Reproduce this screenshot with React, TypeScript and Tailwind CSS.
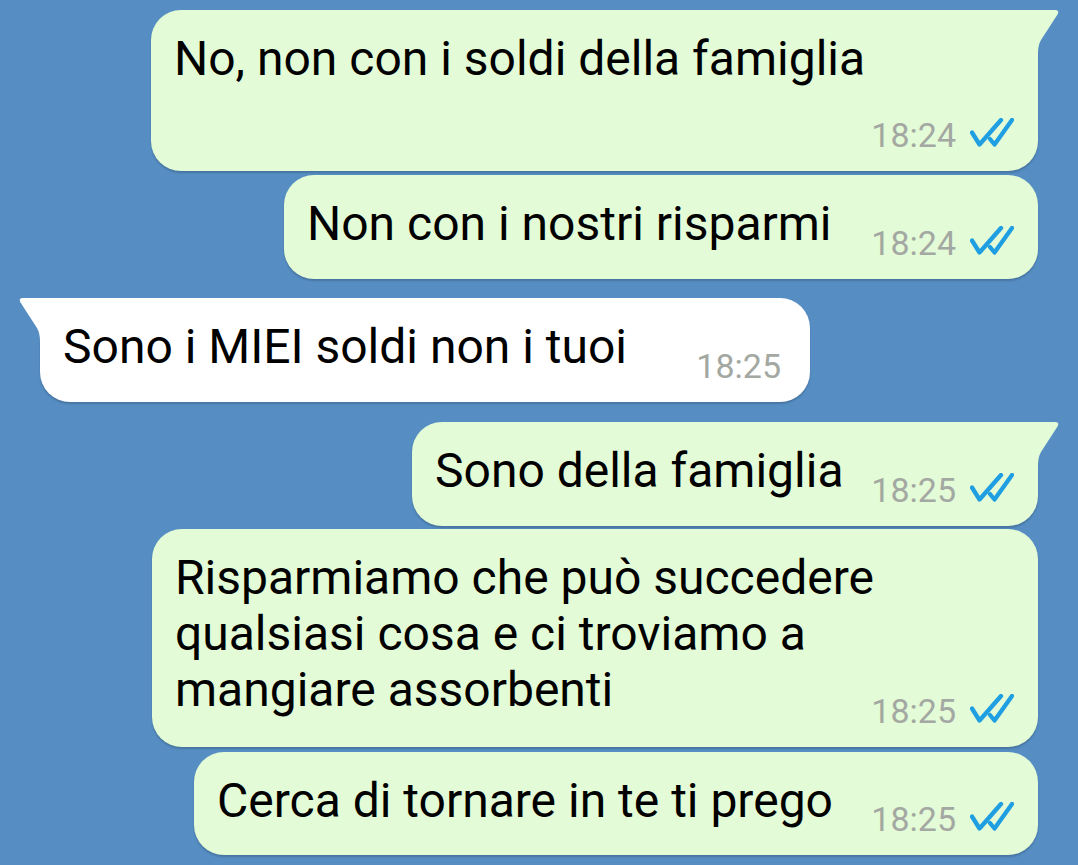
import type { ReactNode } from "react";

type Msg = {
  out: boolean;
  tail?: boolean;
  lines: string[];
  time: string;
  layout: "inline" | "below";
  box: string; // width / height / margin classes
};

const messages: Msg[] = [
  {
    out: true,
    tail: true,
    lines: ["No, non con i soldi della famiglia"],
    time: "18:24",
    layout: "below",
    box: "w-[887px] h-[161px] mt-[10px]",
  },
  {
    out: true,
    lines: ["Non con i nostri risparmi"],
    time: "18:24",
    layout: "inline",
    box: "w-[754px] h-[104px] mt-[4px]",
  },
  {
    out: false,
    tail: true,
    lines: ["Sono i MIEI soldi non i tuoi"],
    time: "18:25",
    layout: "inline",
    box: "w-[770px] h-[104px] mt-[19px]",
  },
  {
    out: true,
    tail: true,
    lines: ["Sono della famiglia"],
    time: "18:25",
    layout: "inline",
    box: "w-[626px] h-[104px] mt-[20px]",
  },
  {
    out: true,
    lines: [
      "Risparmiamo che può succedere",
      "qualsiasi cosa e ci troviamo a",
      "mangiare assorbenti",
    ],
    time: "18:25",
    layout: "inline",
    box: "w-[886px] h-[218px] mt-[3px]",
  },
  {
    out: true,
    lines: ["Cerca di tornare in te ti prego"],
    time: "18:25",
    layout: "inline",
    box: "w-[844px] h-[103px] mt-[5px]",
  },
];

function DoubleCheck() {
  return (
    <svg
      width="44"
      height="30"
      viewBox="0 0 44 30"
      fill="none"
      stroke="#1f9fe2"
      strokeWidth="4.3"
      strokeLinecap="round"
      strokeLinejoin="round"
      className="mb-[7px] ml-[14px] shrink-0"
    >
      <path d="M2 14.5 L9.5 26.5 L31 2" />
      <path d="M20 21 L24.5 26.5 L42 2" />
    </svg>
  );
}

function Time({ time, out }: { time: string; out: boolean }) {
  return (
    <div className="flex shrink-0 items-end self-end pb-[16px]">
      <span className="text-[34px] leading-[40px] text-[#a3a8a2]">{time}</span>
      {out && <DoubleCheck />}
    </div>
  );
}

function Tail({ out }: { out: boolean }) {
  // little speech tail on the first bubble of a group
  if (out) {
    return (
      <svg
        width="23"
        height="44"
        viewBox="0 0 23 44"
        className="absolute top-0 left-full -ml-px"
      >
        <path
          d="M0 0 H18 Q23 0 20.5 4.5 L4 30 Q1 35 1 44 L0 44 Z"
          fill="#e3fbd6"
        />
      </svg>
    );
  }
  return (
    <svg
      width="23"
      height="44"
      viewBox="0 0 23 44"
      className="absolute top-0 right-full -mr-px"
    >
      <path d="M23 0 H5 Q0 0 2.5 4.5 L19 30 Q22 35 22 44 L23 44 Z" fill="#ffffff" />
    </svg>
  );
}

function Bubble({ m }: { m: Msg }) {
  const text: ReactNode = m.lines.map((l, i) => (
    <span key={i} className="block whitespace-nowrap">
      {l}
    </span>
  ));

  return (
    <div
      className={`relative flex shrink-0 shadow-[0_2px_2px_rgba(0,0,0,0.18)] ${m.box} ${
        m.out
          ? "self-end mr-[40px] bg-[#e3fbd6] pl-[23px] pr-[24px]"
          : "self-start ml-[40px] bg-white pl-[23px] pr-[29px]"
      } ${m.layout === "below" ? "flex-col justify-between" : "flex-row justify-between"} rounded-[30px] ${
        m.tail ? (m.out ? "rounded-tr-none" : "rounded-tl-none") : ""
      }`}
    >
      {m.tail && <Tail out={m.out} />}
      <p className="min-w-0 shrink self-start pt-[21px] text-[48px] leading-[56px] text-black">
        {text}
      </p>
      <Time time={m.time} out={m.out} />
    </div>
  );
}

export default function App() {
  return (
    <div
      className="flex h-[865px] w-[1078px] flex-col overflow-hidden bg-[#568ec4]"
      style={{ fontFamily: "Roboto, 'Noto Sans', sans-serif" }}
    >
      {messages.map((m, i) => (
        <Bubble key={i} m={m} />
      ))}
    </div>
  );
}
